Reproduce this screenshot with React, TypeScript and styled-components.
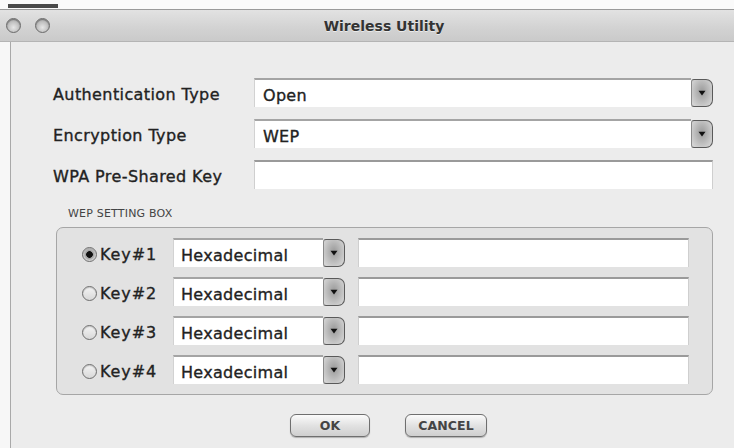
import React from "react";
import styled, { createGlobalStyle } from "styled-components";

const GlobalStyle = createGlobalStyle`
	html, body {
		margin: 0;
		padding: 0;
		background: #f7f7f7;
	}
	body {
		font-family: "DejaVu Sans", "Liberation Sans", sans-serif;
		color: #222;
	}
`;

const Screen = styled.div`
	width: 734px;
	height: 448px;
	overflow: hidden;
	display: flex;
	flex-direction: column;
	background: #f7f7f7;
`;

const TopStrip = styled.div`
	height: 9px;
	background: #fafafa;
	border-bottom: 1px solid #9a9a9a;
	display: flex;
	align-items: flex-start;
`;

const StripMark = styled.div`
	margin: 4px 0 0 8px;
	width: 50px;
	height: 4px;
	background: #4a4a4a;
`;

const TitleBar = styled.div`
	height: 31px;
	border-bottom: 1px solid #b4b4b4;
	background: linear-gradient(#e2e2e2, #d2d2d2 60%, #cacaca);
	display: flex;
	align-items: center;
	padding-left: 6px;
`;

const Lights = styled.div`
	display: flex;
	gap: 14px;
`;

const Light = styled.div`
	width: 13px;
	height: 13px;
	border-radius: 50%;
	border: 1.5px solid #6a6a6a;
	background: radial-gradient(circle at 50% 65%, #e6e6e6, #b0b0b0 75%);
	box-shadow: inset 0 1px 1px rgba(0, 0, 0, 0.35);
`;

const Title = styled.div`
	flex: 1;
	text-align: center;
	padding-right: 16px;
	font-size: 14px;
	font-weight: bold;
	color: #333;
	text-shadow: 0 1px 0 rgba(255, 255, 255, 0.6);
`;

const Body = styled.div`
	flex: 1;
	margin-left: 10px;
	border-left: 1px solid #a9a9a9;
	background: #ececec;
	padding: 36px 21px 0 42px;
	display: flex;
	flex-direction: column;
`;

const FormGrid = styled.div`
	display: grid;
	grid-template-columns: 201px 1fr;
	grid-auto-rows: 29px;
	row-gap: 12px;
	align-items: center;
`;

const Label = styled.div`
	font-size: 16px;
	letter-spacing: 0.4px;
	color: #222;
	padding-top: 3px;
	-webkit-text-stroke: 0.35px #222;
`;

const Combo = styled.div<{ $small?: boolean }>`
	display: flex;
	height: 29px;
	width: ${(p) => (p.$small ? "172px" : "auto")};
`;

const ComboField = styled.div<{ $indent: number }>`
	flex: 1;
	background: #fff;
	border-top: 2px solid #a4a4a4;
	border-left: 1px solid #d2d2d2;
	box-sizing: border-box;
	padding-left: ${(p) => p.$indent}px;
	font-size: 16px;
	letter-spacing: 0.3px;
	display: flex;
	align-items: center;
	padding-top: 4px;
	-webkit-text-stroke: 0.35px #222;
`;

const ComboButton = styled.div`
	width: 20px;
	height: 26px;
	margin-top: 1px;
	border: 1px solid #5a5a5a;
	border-left-color: #8a8a8a;
	border-radius: 3px 7px 7px 3px;
	background: radial-gradient(ellipse at 50% 45%, #9a9a9a, #c6c6c6 65%, #dcdcdc);
	display: flex;
	align-items: center;
	justify-content: center;
`;

const TextField = styled.div`
	height: 29px;
	background: #fff;
	border-top: 2px solid #9a9a9a;
	border-left: 1px solid #cfcfcf;
	border-right: 1px solid #cfcfcf;
	box-sizing: border-box;
`;

const GroupLabel = styled.div`
	margin: 19px 0 0 15px;
	font-size: 11px;
	line-height: 12px;
	color: #444;
	letter-spacing: 0.2px;
`;

const GroupBox = styled.div`
	margin: 7px 0 0 3px;
	border: 1px solid #a6a6a6;
	border-radius: 7px;
	background: #e2e2e2;
	padding: 10px 23px 10px 25px;
	display: flex;
	flex-direction: column;
	gap: 10px;
`;

const KeyRow = styled.div`
	display: grid;
	grid-template-columns: 18px 73px 185px 1fr;
	height: 29px;
	align-items: center;
`;

const Radio = styled.div<{ $on?: boolean }>`
	width: 13px;
	height: 13px;
	margin-top: 3px;
	border-radius: 50%;
	border: 1px solid #6d6d6d;
	background: ${(p) =>
		p.$on
			? "radial-gradient(circle, #111 0 3px, #9a9a9a 3.6px, #e8e8e8 7px)"
			: "linear-gradient(#f4f4f4, #d8d8d8)"};
	box-shadow: inset 0 1px 1px rgba(0, 0, 0, 0.2);
`;

const KeyLabel = styled.div`
	font-size: 16px;
	letter-spacing: 0.9px;
	color: #222;
	padding-top: 3px;
	-webkit-text-stroke: 0.35px #222;
`;

const Footer = styled.div`
	margin-top: 19px;
	padding-left: 237px;
	display: flex;
	gap: 35px;
`;

const Button = styled.div<{ $width: number }>`
	width: ${(p) => p.$width}px;
	height: 23px;
	box-sizing: border-box;
	border: 1px solid #6f6f6f;
	border-radius: 6px;
	background: linear-gradient(#fbfbfb, #e2e2e2 50%, #cfcfcf);
	box-shadow: 0 1px 1px rgba(0, 0, 0, 0.25);
	display: flex;
	align-items: center;
	justify-content: center;
	font-size: 12.5px;
	font-weight: bold;
	color: #444;
	letter-spacing: 0.1px;
`;

const Arrow = () => (
	<svg width="8" height="6" viewBox="0 0 8 6">
		<path d="M0.5 0.8 L7.5 0.8 L4 5.4 Z" fill="#111" />
	</svg>
);

const keys = [1, 2, 3, 4];

const App: React.FC = () => {
	return (
		<React.Fragment>
			<GlobalStyle />
			<Screen>
				<TopStrip>
					<StripMark />
				</TopStrip>
				<TitleBar>
					<Lights>
						<Light />
						<Light />
					</Lights>
					<Title>Wireless Utility</Title>
				</TitleBar>
				<Body>
					<FormGrid>
						<Label>Authentication Type</Label>
						<Combo>
							<ComboField $indent={8}>Open</ComboField>
							<ComboButton>
								<Arrow />
							</ComboButton>
						</Combo>
						<Label>Encryption Type</Label>
						<Combo>
							<ComboField $indent={8}>WEP</ComboField>
							<ComboButton>
								<Arrow />
							</ComboButton>
						</Combo>
						<Label>WPA Pre-Shared Key</Label>
						<TextField />
					</FormGrid>

					<GroupLabel>WEP SETTING BOX</GroupLabel>
					<GroupBox>
						{keys.map((k) => (
							<KeyRow key={k}>
								<Radio $on={k === 1} />
								<KeyLabel>Key#{k}</KeyLabel>
								<Combo $small>
									<ComboField $indent={7}>Hexadecimal</ComboField>
									<ComboButton>
										<Arrow />
									</ComboButton>
								</Combo>
								<TextField />
							</KeyRow>
						))}
					</GroupBox>

					<Footer>
						<Button $width={80}>OK</Button>
						<Button $width={82}>CANCEL</Button>
					</Footer>
				</Body>
			</Screen>
		</React.Fragment>
	);
};

export default App;
